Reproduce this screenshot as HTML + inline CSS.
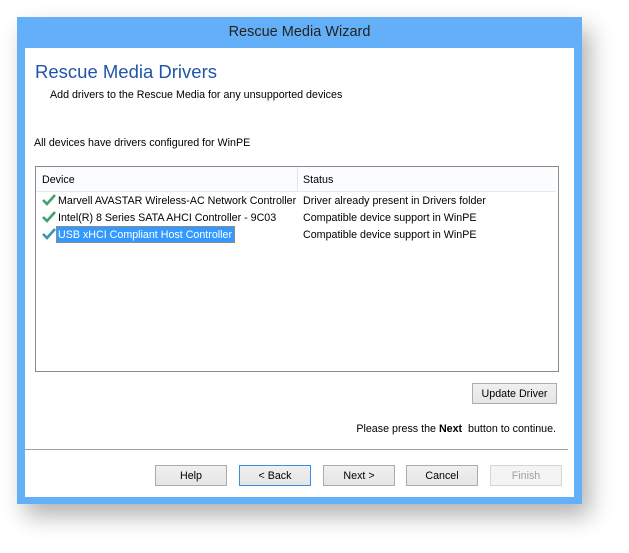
<!DOCTYPE html>
<html><head><style>
body{margin:0;width:629px;height:553px;background:#fff;position:relative;overflow:hidden;font-family:"Liberation Sans",sans-serif;font-size:10.7px;color:#000}
.win{position:absolute;left:17px;top:17px;width:565px;height:487px;background:#63b0f8;box-shadow:8px 12px 22px rgba(0,0,0,.3);}
.title{position:absolute;left:0;top:0;width:565px;height:31px;text-align:center;line-height:31px;font-size:14.5px;color:#222}
.inner{position:absolute;left:8px;top:31px;width:549px;height:449px;background:#fff}
.a{position:absolute;white-space:nowrap}
.list{position:absolute;left:35px;top:166px;width:522px;height:204px;border:1px solid #8a8a90;background:#fff}
.btn{position:absolute;top:465px;width:70px;height:19px;border:1px solid #acacac;background:linear-gradient(#f0f0f0,#e5e5e5);text-align:center;line-height:20px;font-size:10.7px}
.chk{position:absolute;left:6px;width:14px;height:12px}
</style></head><body>
<div class="win"><div class="title">Rescue Media Wizard</div><div class="inner"></div></div>
<div class="a" style="left:35px;top:61px;font-size:18.5px;color:#1f56a8">Rescue Media Drivers</div>
<div class="a" style="left:50px;top:89px">Add drivers to the Rescue Media for any unsupported devices</div>
<div class="a" style="left:34px;top:137px">All devices have drivers configured for WinPE</div>
<div class="list">
 <div style="position:absolute;left:0;top:0;width:520px;height:24px;background:#fbfcfe;border-bottom:1px solid #e3e9f2"></div>
 <div style="position:absolute;left:261px;top:0;width:1px;height:24px;background:#e3e6eb"></div>
 <div class="a" style="left:6px;top:7px">Device</div>
 <div class="a" style="left:267px;top:7px">Status</div>
 <svg class="chk" style="top:27px" viewBox="0 0 14 12"><path d="M1 6 L5 10 L13 1" stroke="#3fa070" stroke-width="2.6" fill="none"/></svg>
 <div class="a" style="left:22px;top:28px">Marvell AVASTAR Wireless-AC Network Controller</div>
 <div class="a" style="left:267px;top:28px">Driver already present in Drivers folder</div>
 <svg class="chk" style="top:44px" viewBox="0 0 14 12"><path d="M1 6 L5 10 L13 1" stroke="#3fa070" stroke-width="2.6" fill="none"/></svg>
 <div class="a" style="left:22px;top:45px">Intel(R) 8 Series SATA AHCI Controller - 9C03</div>
 <div class="a" style="left:267px;top:45px">Compatible device support in WinPE</div>
 <svg class="chk" style="top:61px" viewBox="0 0 14 12"><path d="M1 6 L5 10 L13 1" stroke="#3a96b0" stroke-width="2.6" fill="none"/></svg>
 <div class="a" style="left:20px;top:59px;width:179px;height:17px;background:#3399ff;border:1px dotted #e08020;box-sizing:border-box"></div>
 <div class="a" style="left:22px;top:62px;color:#fff">USB xHCI Compliant Host Controller</div>
 <div class="a" style="left:267px;top:62px">Compatible device support in WinPE</div>
</div>
<div class="btn" style="left:472px;top:383px;width:83px">Update Driver</div>
<div class="a" style="right:73px;top:423px">Please press the <b>Next</b>&nbsp; button to continue.</div>
<div style="position:absolute;left:25px;top:449px;width:543px;height:1px;background:#a0a0a0"></div>
<div class="btn" style="left:155px">Help</div>
<div class="btn" style="left:239px;border-color:#3c8fe0">&lt; Back</div>
<div class="btn" style="left:323px">Next &gt;</div>
<div class="btn" style="left:406px">Cancel</div>
<div class="btn" style="left:490px;color:#a0a0a0;border-color:#d5d5d5;background:#f4f4f4">Finish</div>
</body></html>
